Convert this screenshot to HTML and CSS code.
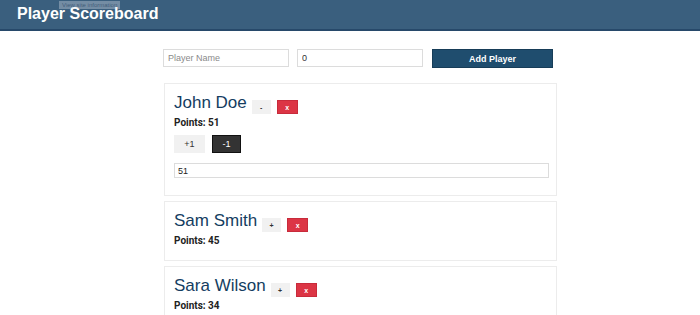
FILE: index.html
```html
<!DOCTYPE html>
<html lang="en">
<head>
    <meta charset="UTF-8">
    <meta name="viewport" content="width=device-width, initial-scale=1.0">
    <title>Player Scoreboard</title>
    <link rel="stylesheet" href="styles.css">
</head>
<body>
    <header class="top-bar">
        <h1>Player Scoreboard</h1>
        <span class="site-tip">View site information</span>
    </header>

    <main class="board">
        <form class="add-form">
            <input type="text" class="field" placeholder="Player Name">
            <input type="number" class="field" value="0">
            <button type="button" class="add-btn">Add Player</button>
        </form>

        <!-- expanded player -->
        <div class="player-card">
            <div class="player-head">
                <h2>John Doe</h2>
                <button class="mini-btn">-</button>
                <button class="mini-btn remove">x</button>
            </div>
            <p class="points">Points: 51</p>
            <div class="step-row">
                <button class="step-btn">+1</button>
                <button class="step-btn dark">-1</button>
            </div>
            <input type="number" class="score-input" value="51">
        </div>

        <div class="player-card">
            <div class="player-head">
                <h2>Sam Smith</h2>
                <button class="mini-btn">+</button>
                <button class="mini-btn remove">x</button>
            </div>
            <p class="points">Points: 45</p>
        </div>

        <div class="player-card">
            <div class="player-head">
                <h2>Sara Wilson</h2>
                <button class="mini-btn">+</button>
                <button class="mini-btn remove">x</button>
            </div>
            <p class="points">Points: 34</p>
        </div>
    </main>
</body>
</html>
```

FILE: styles.css
```css
:root {
    --bar: #3a5f7e;
    --navy: #1f4d6e;
    --name: #143d61;
    --red: #dc3545;
}

body {
    margin: 0;
    font-family: 'Liberation Sans', Arial, sans-serif;
    background: #ffffff;
    color: #222;
}

.top-bar {
    position: relative;
    height: 29px;
    background: var(--bar);
    border-bottom: 2px solid #27496a;
    padding-left: 17px;
}

.top-bar h1 {
    margin: 0;
    font-size: 16px;
    line-height: 28px;
    color: #fff;
}

.site-tip {
    position: absolute;
    left: 59px;
    top: 1px;
    padding: 0 3px;
    height: 8px;
    line-height: 8px;
    font-size: 6px;
    background: rgba(225, 230, 235, 0.35);
    color: rgba(40, 70, 100, 0.7);
}

.board {
    width: 393px;
    margin: 18px 0 0 164px;
}

.add-form {
    display: flex;
    gap: 8px;
    margin: 0 0 15px -1px;
}

.field {
    box-sizing: border-box;
    width: 126px;
    height: 18px;
    padding: 0 4px;
    border: 1px solid #dcdcdc;
    font-family: 'Liberation Sans', Arial, sans-serif;
    font-size: 9px;
    color: #333;
    -moz-appearance: textfield;
}

.field::placeholder {
    color: #8a8a8a;
}

.field::-webkit-inner-spin-button,
.score-input::-webkit-inner-spin-button {
    -webkit-appearance: none;
}

.add-btn {
    width: 121px;
    height: 19px;
    margin-left: 1px;
    border: 1px solid #173d58;
    background: var(--navy);
    color: #fff;
    font-family: 'Liberation Sans', Arial, sans-serif;
    font-size: 9px;
    font-weight: bold;
}

.player-card {
    border: 1px solid #ececec;
    padding: 8px 9px 13px;
    margin-bottom: 5px;
}

.player-head {
    display: flex;
    align-items: flex-end;
}

.player-head h2 {
    margin: 0 5px 0 0;
    font-family: 'Liberation Sans', Arial, sans-serif;
    font-size: 17px;
    font-weight: normal;
    line-height: 22px;
    color: var(--name);
}

.mini-btn {
    height: 14px;
    min-width: 19px;
    padding: 0 7px;
    margin-right: 6px;
    border: none;
    background: #f1f1f1;
    color: #333;
    font-size: 7px;
    font-weight: bold;
}

.mini-btn.remove {
    min-width: 21px;
    background: var(--red);
    border: 1px solid #c82b3b;
    color: #fff;
}

.points {
    margin: 3px 0 0;
    font-family: Roboto, 'Liberation Sans', sans-serif;
    font-size: 10px;
    font-weight: bold;
    line-height: 12px;
    color: #222;
}

.step-row {
    display: flex;
    gap: 7px;
    margin-top: 6px;
}

.step-btn {
    width: 31px;
    height: 18px;
    border: none;
    background: #f1f1f1;
    color: #333;
    font-size: 9px;
}

.step-btn.dark {
    width: 29px;
    background: #333;
    border: 1px solid #111;
    color: #fff;
}

.score-input {
    box-sizing: border-box;
    display: block;
    width: 375px;
    height: 15px;
    margin: 10px 0 4px;
    padding: 0 3px;
    border: 1px solid #dcdcdc;
    font-family: 'Liberation Sans', Arial, sans-serif;
    font-size: 9px;
    color: #222;
    -moz-appearance: textfield;
}
```
